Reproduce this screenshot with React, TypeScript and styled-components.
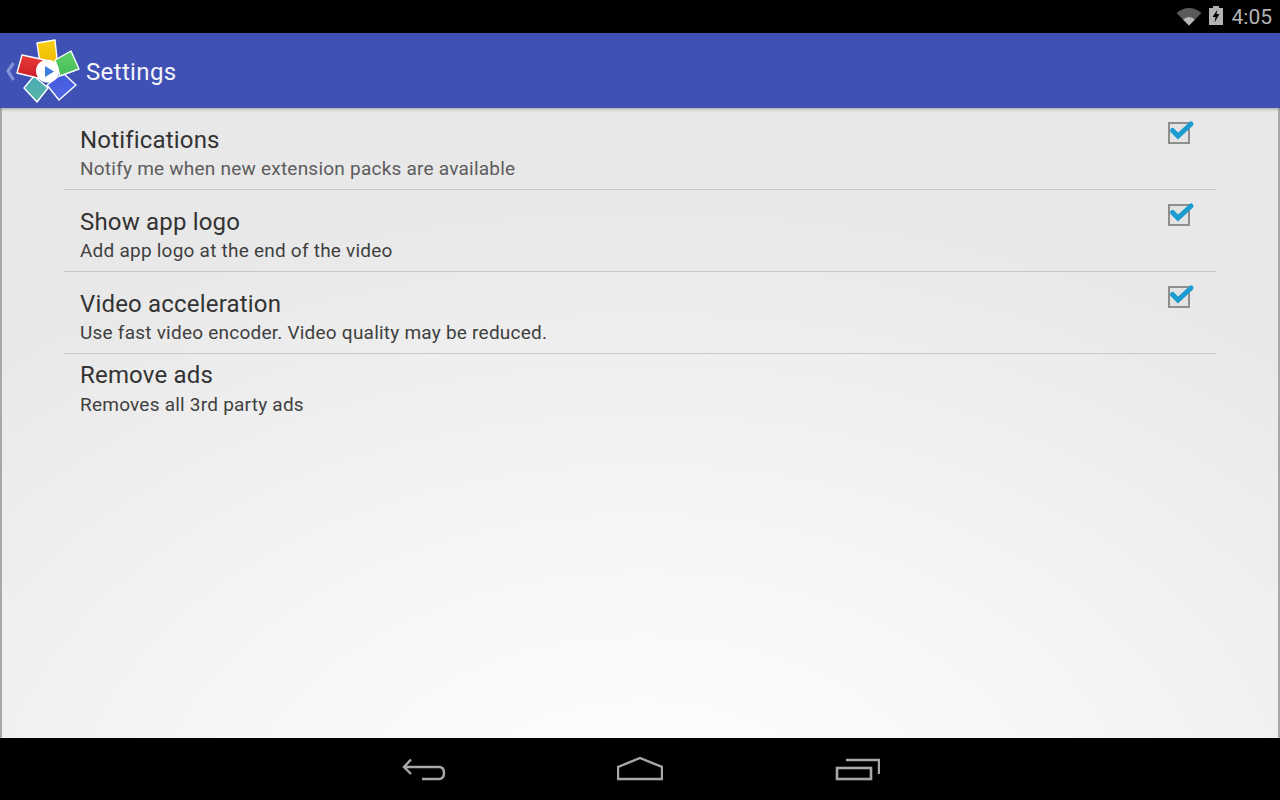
import React from "react";
import styled, { createGlobalStyle } from "styled-components";

const Global = createGlobalStyle`
  html, body { margin: 0; padding: 0; background: #000; }
  * { box-sizing: border-box; }
`;

const Screen = styled.div`
  width: 1280px;
  height: 800px;
  display: flex;
  flex-direction: column;
  font-family: Roboto, sans-serif;
  overflow: hidden;
`;

const StatusBar = styled.div`
  height: 33px;
  background: #000;
  display: flex;
  align-items: center;
  justify-content: flex-end;
  padding-right: 8px;
  color: #b4b4b4;
`;

const StatusIcons = styled.div`
  display: flex;
  align-items: flex-start;
  height: 33px;
  padding-top: 6px;
  margin-right: 9px;
  gap: 7px;
`;

const Clock = styled.span`
  font-size: 21px;
  line-height: 33px;
  padding-top: 1px;
`;

const AppBar = styled.header`
  height: 75px;
  background: #3f51b5;
  display: flex;
  align-items: center;
  color: #fff;
  box-shadow: 0 1px 3px rgba(0, 0, 0, 0.3);
  position: relative;
  z-index: 1;
`;

const LogoBox = styled.div`
  width: 86px;
  height: 75px;
  flex: none;
`;

const AppTitle = styled.h1`
  margin: 3px 0 0;
  font-size: 24px;
  font-weight: 400;
  letter-spacing: 0.36px;
  color: #f4f5fb;
`;

const Content = styled.main`
  flex: 1;
  padding: 0 62px;
  background: radial-gradient(ellipse 1000px 640px at 640px 720px, #ffffff 0%, #f6f6f6 45%, #e8e8e8 100%);
  border-left: 2px solid #a8a8a8;
  border-right: 2px solid #a8a8a8;
`;

const Row = styled.div<{ $last?: boolean }>`
  height: ${(p) => (p.$last ? "auto" : "82px")};
  padding: ${(p) => (p.$last ? "5px" : "16px")} 22px 0 16px;
  display: flex;
  justify-content: space-between;
  border-bottom: ${(p) => (p.$last ? "none" : "1px solid #c8c8c8")};
`;

const RowText = styled.div`
  display: flex;
  flex-direction: column;
`;

const RowTitle = styled.div<{ $last?: boolean }>`
  font-size: 24px;
  line-height: 32px;
  letter-spacing: 0.18px;
  color: #333;
  margin-bottom: ${(p) => (p.$last ? "1px" : "0")};
`;

const RowSummary = styled.div<{ $muted?: boolean }>`
  font-size: 19px;
  line-height: 26px;
  letter-spacing: 0.23px;
  color: ${(p) => (p.$muted ? "#5c5c5c" : "#3f3f3f")};
`;

const CheckIcon = styled.svg`
  width: 30px;
  height: 30px;
  margin-top: -7px;
  margin-right: -2px;
  flex: none;
`;

const NavBar = styled.nav`
  height: 62px;
  background: #000;
  display: flex;
  justify-content: center;
  align-items: flex-start;
  gap: 171px;
  padding-top: 18px;
`;

const NavIcon = styled.svg`
  width: 46px;
  height: 26px;
  display: block;
`;

const Check = () => (
  <CheckIcon viewBox="0 0 30 30">
    <rect x="3" y="6" width="20" height="20" fill="#e3e3e3" stroke="#8e8e8e" strokeWidth="2" />
    <path d="M6.5 13.5 L12 19 L25 7" fill="none" stroke="#1b9bd0" strokeWidth="5" strokeLinecap="round" />
  </CheckIcon>
);

const petals = [
  { id: "y", pts: "37,10 55,7 58,35 41,37", from: "#f7cf10", to: "#efb400" },
  { id: "b", pts: "76,52 59,67 47,52 63,40", from: "#4258d8", to: "#5068e8" },
  { id: "g", pts: "71,18 79,36 60,43 55,27", from: "#62d068", to: "#46bc58" },
  { id: "t", pts: "24,55 37,69 48,55 34,43", from: "#4aa8b8", to: "#58b8a4" },
  { id: "r", pts: "22,22 45,27 42,46 17,40", from: "#e83c34", to: "#cc1c2c" },
];

const Logo = () => (
  <LogoBox>
    <svg width="86" height="75" viewBox="0 0 86 75">
      <defs>
        {petals.map((p) => (
          <linearGradient key={p.id} id={`petal-${p.id}`} x1="0" y1="0" x2="0" y2="1">
            <stop offset="0" stopColor={p.from} />
            <stop offset="1" stopColor={p.to} />
          </linearGradient>
        ))}
      </defs>
      <path d="M13.5 30 L8 38 L13.5 47" fill="none" stroke="#8593d8" strokeWidth="3.2" />
      {petals.map((p) => (
        <polygon
          key={p.id}
          points={p.pts}
          fill={`url(#petal-${p.id})`}
          stroke="#fff"
          strokeWidth="1.4"
          strokeLinejoin="round"
        />
      ))}
      <circle cx="47.5" cy="38" r="11.5" fill="#fff" />
      <path d="M45 33 L54 38.5 L45 44 Z" fill="#3f7fe0" />
    </svg>
  </LogoBox>
);

const items = [
  { t: "Notifications", s: "Notify me when new extension packs are available", check: true, muted: true },
  { t: "Show app logo", s: "Add app logo at the end of the video", check: true },
  { t: "Video acceleration", s: "Use fast video encoder. Video quality may be reduced.", check: true },
  { t: "Remove ads", s: "Removes all 3rd party ads", check: false },
];

export default function App() {
  return (
    <Screen>
      <Global />
      <StatusBar>
        <StatusIcons>
          <svg width="26" height="20" viewBox="0 0 26 20">
            <path d="M0.5 7 Q13 -3 25.5 7 L13 19.5 Z" fill="#5a5a5a" />
            <path d="M7 13.5 Q13 8.5 19 13.5 L13 19.5 Z" fill="#b8b8b8" />
          </svg>
          <svg width="14" height="20" viewBox="0 0 14 20">
            <path d="M4 0 H10 V2 H14 V19 H0 V2 H4 Z" fill="#b4b4b4" />
            <path d="M8.5 3.5 L3.5 11 H6.5 L5.5 16.5 L10.5 8 H7.5 Z" fill="#000" />
          </svg>
        </StatusIcons>
        <Clock>4:05</Clock>
      </StatusBar>
      <AppBar>
        <Logo />
        <AppTitle>Settings</AppTitle>
      </AppBar>
      <Content>
        {items.map((it, i) => {
          const last = i === items.length - 1;
          return (
            <Row key={it.t} $last={last}>
              <RowText>
                <RowTitle $last={last}>{it.t}</RowTitle>
                <RowSummary $muted={it.muted}>{it.s}</RowSummary>
              </RowText>
              {it.check && <Check />}
            </Row>
          );
        })}
      </Content>
      <NavBar>
        <NavIcon viewBox="0 0 46 26">
          <path d="M11 3.5 L4 11 L11 18 M4 11 H39 Q44 11 44 17 Q44 23 39 23 H22" fill="none" stroke="#a8a8a8" strokeWidth="2.4" />
        </NavIcon>
        <NavIcon viewBox="0 0 46 26">
          <path d="M1 11 L23 2 L45 11 V23 H1 Z" fill="none" stroke="#a8a8a8" strokeWidth="2.4" />
        </NavIcon>
        <NavIcon viewBox="0 0 46 26">
          <path d="M12 4 H45 V18" fill="none" stroke="#a8a8a8" strokeWidth="2.4" />
          <rect x="3" y="12" width="34" height="11" fill="none" stroke="#a8a8a8" strokeWidth="2.6" />
        </NavIcon>
      </NavBar>
    </Screen>
  );
}
